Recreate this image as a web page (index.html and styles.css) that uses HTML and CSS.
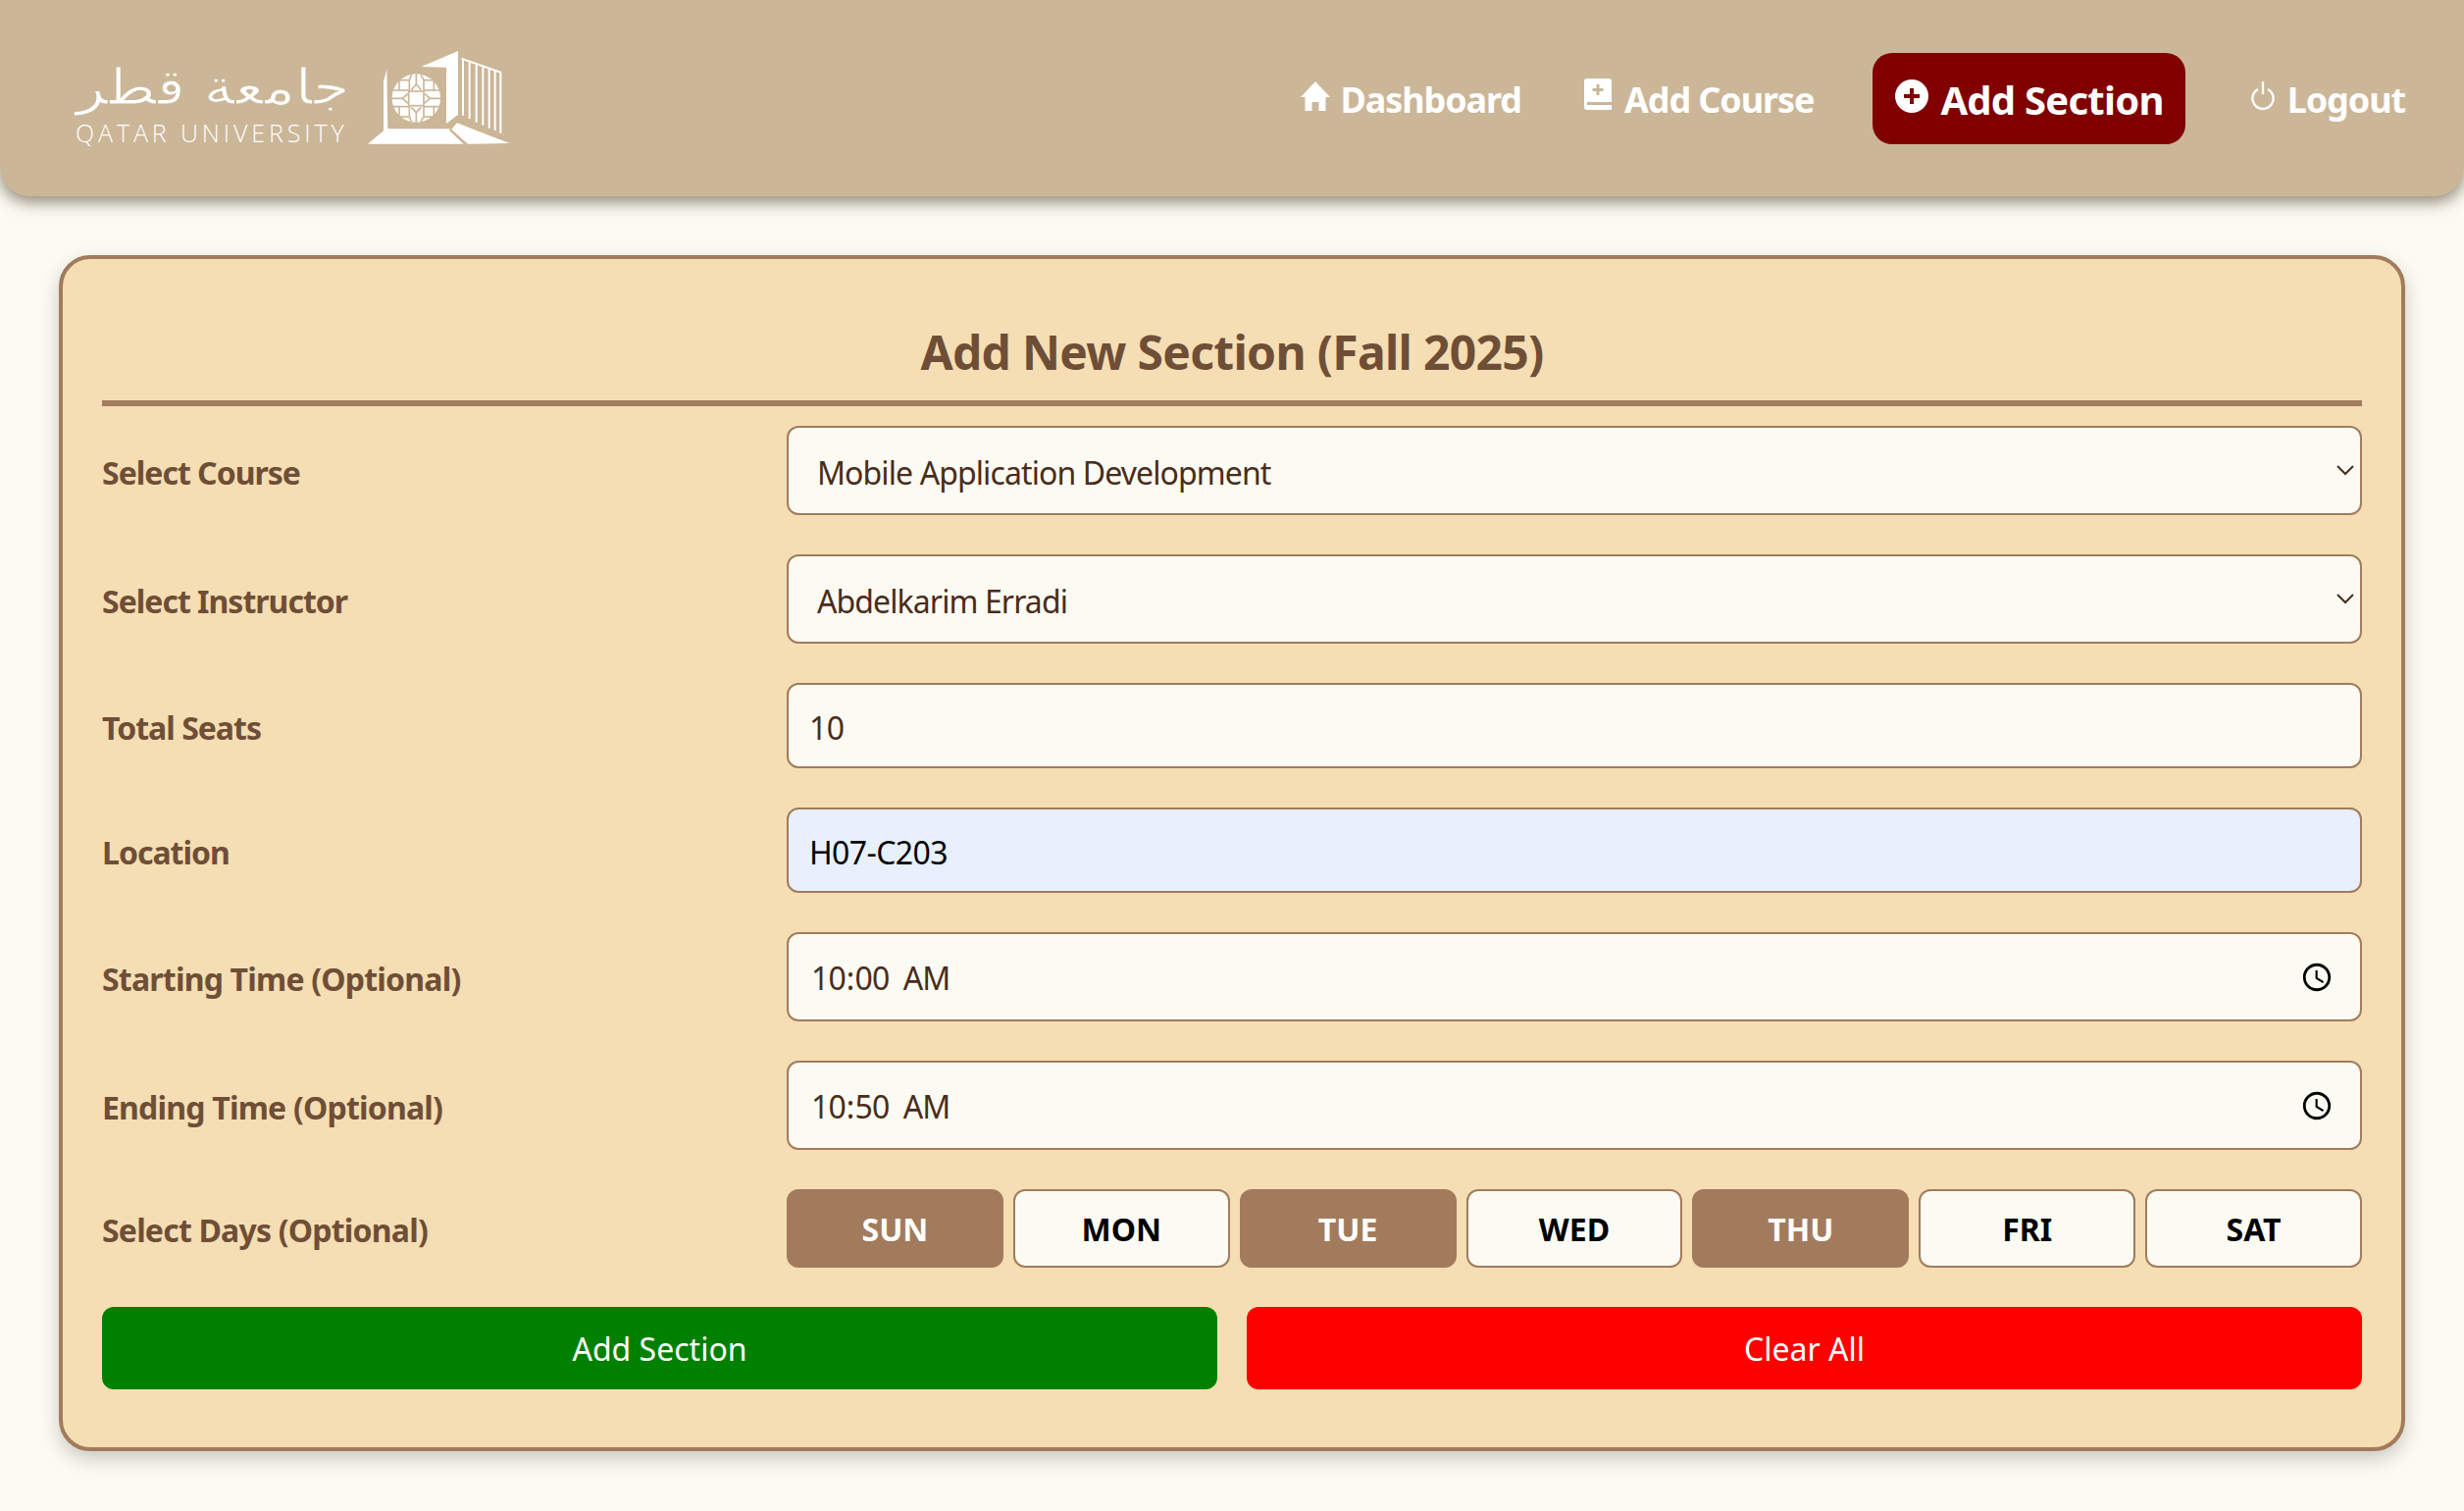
FILE: index.html
```html
<!DOCTYPE html>
<html lang="en">
<head>
  <meta charset="UTF-8">
  <meta name="viewport" content="width=device-width, initial-scale=1.0">
  <title>Add Section</title>
  <link rel="stylesheet" href="styles.css">
</head>
<body>

<header class="topbar">
  <a class="logo" href="#">
    <span class="logo-text">
      <span class="logo-ar" lang="ar" dir="rtl">جامعة قطر</span>
      <span class="logo-en">QATAR UNIVERSITY</span>
    </span>
    <svg class="logo-mark" viewBox="0 0 468 318" fill="#fff">
      <path d="M70 74 L73 256 L262 256 L262 262 L305 302 L12 302 L60 262 L60 110 Z"/>
      <path d="M175 66 L288 18 L288 212 L252 240 L252 68 Z"/>
      <path d="M285 238 L445 300 L318 302 L268 258 Z"/>
      <path d="M298 41 L420 84 M303 43 V215 M323 50 V225 M344 58 V236 M364 65 V245 M383 72 V254 M401 78 V261 M418 84 V269" fill="none" stroke="#fff" stroke-width="6"/>
      <circle cx="160" cy="162" r="74"/>
      <g fill="none" stroke="#cbb698" stroke-width="5">
        <rect x="137" y="141" width="46" height="44"/>
        <rect x="108" y="107" width="31" height="31"/>
        <rect x="183" y="107" width="31" height="31"/>
        <rect x="108" y="188" width="31" height="31"/>
        <rect x="183" y="188" width="31" height="31"/>
        <path d="M160 86 V120 M145 137 L160 120 L175 137 M139 107 L146 90 M183 107 L174 90"/>
        <path d="M160 238 V206 M145 190 L160 206 L175 190 M139 219 L146 234 M183 219 L174 234"/>
        <path d="M84 163 H118 M135 148 L118 163 L135 178 M108 138 L90 138 M108 188 L90 188"/>
        <path d="M236 163 H202 M185 148 L202 163 L185 178 M214 138 L232 138 M214 188 L232 188"/>
        <path d="M108 107 L100 100 M214 107 L222 100 M108 219 L100 226 M214 219 L222 226"/>
      </g>
    </svg>
  </a>
  <nav class="nav">
    <a class="nav-link" href="#">
      <svg class="nav-icon icon-home" viewBox="0 0 30 30" fill="#fff"><path d="M15 0 L30 16 L25.5 16 L25.5 30 L18.5 30 L18.5 21 L11.5 21 L11.5 30 L4.5 30 L4.5 16 L0 16 Z"/></svg>
      <span class="nav-text">Dashboard</span>
    </a>
    <a class="nav-link" href="#">
      <svg class="nav-icon icon-book" viewBox="0 0 28 32" fill="#fff"><path fill-rule="evenodd" d="M3 0 H25 A3 3 0 0 1 28 3 V24 H3 V27 H28 V32 H3 A3 3 0 0 1 0 29 V3 A3 3 0 0 1 3 0 Z M12.5 6 V10 H8.5 V13 H12.5 V17 H15.5 V13 H19.5 V10 H15.5 V6 Z"/></svg>
      <span class="nav-text">Add Course</span>
    </a>
    <a class="nav-link active" href="#">
      <svg class="nav-icon icon-plus" viewBox="0 0 34 34" fill="#fff"><path fill-rule="evenodd" d="M17 0 A17 17 0 1 1 17 34 A17 17 0 1 1 17 0 Z M15 9 V15 H9 V19 H15 V25 H19 V19 H25 V15 H19 V9 Z"/></svg>
      <span class="nav-text">Add Section</span>
    </a>
    <a class="nav-link" href="#">
      <svg class="nav-icon icon-power" viewBox="0 0 24 30" fill="none" stroke="#fff" stroke-width="2.4"><path d="M12 0 V13"/><path d="M7 8 A10.6 10.6 0 1 0 17 8"/></svg>
      <span class="nav-text">Logout</span>
    </a>
  </nav>
</header>

<main class="card">
  <h2 class="card-title">Add New Section (Fall 2025)</h2>

  <form class="section-form">
    <label class="field-label" for="course">Select Course</label>
    <select id="course" class="field tall">
      <option>Mobile Application Development</option>
    </select>

    <label class="field-label" for="instructor">Select Instructor</label>
    <select id="instructor" class="field tall">
      <option>Abdelkarim Erradi</option>
    </select>

    <label class="field-label" for="seats">Total Seats</label>
    <input id="seats" class="field short" type="text" value="10">

    <label class="field-label" for="location">Location</label>
    <input id="location" class="field short autofilled" type="text" value="H07-C203">

    <label class="field-label optional" for="start">Starting Time (Optional)</label>
    <input id="start" class="field tall" type="time" value="10:00">

    <label class="field-label optional" for="end">Ending Time (Optional)</label>
    <input id="end" class="field tall" type="time" value="10:50">

    <span class="field-label optional">Select Days (Optional)</span>
    <div class="days">
      <button type="button" class="day on">SUN</button>
      <button type="button" class="day">MON</button>
      <button type="button" class="day on">TUE</button>
      <button type="button" class="day">WED</button>
      <button type="button" class="day on">THU</button>
      <button type="button" class="day">FRI</button>
      <button type="button" class="day">SAT</button>
    </div>

    <div class="actions">
      <button type="submit" class="action add">Add Section</button>
      <button type="reset" class="action clear">Clear All</button>
    </div>
  </form>
</main>

</body>
</html>
```

FILE: styles.css
```css
* {
  box-sizing: border-box;
}

body {
  margin: 0;
  height: 1540px;
  overflow: hidden;
  font-family: "Noto Sans", "Open Sans", sans-serif;
  font-size: 32px;
  background-color: #fbfbf3;
  color: #4a2c1a;
}

.topbar {
  display: flex;
  align-items: center;
  justify-content: space-between;
  height: 200px;
  padding: 0 36px 0 77px;
  background-color: #cbb698;
  border-radius: 0 0 30px 30px;
  box-shadow: 0 6px 16px rgba(60, 40, 20, 0.55);
}

.logo {
  display: flex;
  align-items: center;
  gap: 14px;
  margin-top: -3px;
  color: #fff;
  text-decoration: none;
}

.logo-text {
  display: flex;
  flex-direction: column;
  width: 280px;
  padding-top: 8px;
}

.logo-ar {
  font-family: "DejaVu Sans", sans-serif;
  font-size: 50px;
  line-height: 64px;
  text-align: center;
  transform: scaleX(1.2);
  -webkit-text-stroke: 1px #cbb698;
}

.logo-en {
  font-family: "Open Sans", sans-serif;
  font-weight: 300;
  font-size: 25px;
  line-height: 28px;
  letter-spacing: 3.9px;
  white-space: nowrap;
}

.logo-mark {
  width: 156px;
  height: 106px;
}

.nav {
  display: flex;
  align-items: center;
  gap: 16px;
}

.nav-link {
  display: flex;
  align-items: center;
  gap: 13px;
  padding: 0 24px;
  color: #fff;
  font-weight: 700;
  font-size: 36px;
  letter-spacing: -1.1px;
  text-decoration: none;
  white-space: nowrap;
}

.nav-text {
  padding-top: 3px;
}

.nav-link.active {
  height: 93px;
  margin: 0 27px 0 20px;
  padding: 0 22px 0 23px;
  gap: 12px;
  background-color: #800000;
  border-radius: 20px;
  font-size: 40px;
  letter-spacing: -0.75px;
}

.nav-icon {
  flex: none;
}

.icon-home { width: 30px; height: 30px; margin: -4px -2px 0 2px; }
.icon-book { width: 28px; height: 32px; margin-top: -8px; }
.icon-plus { width: 34px; height: 34px; margin-top: -4px; }
.icon-power { width: 24px; height: 30px; margin-top: -5px; }

.card {
  margin: 60px 60px 0;
  height: 1219px;
  padding: 40px;
  background-color: #f5deb3;
  border: 4px solid #a27b5c;
  border-radius: 32px;
  box-shadow: 0 8px 20px rgba(0, 0, 0, 0.2);
}

.card-title {
  margin: 0 0 20px;
  height: 110px;
  border-bottom: 6px solid #a27b5c;
  font-size: 48px;
  font-weight: 700;
  letter-spacing: -0.7px;
  line-height: 109px;
  text-align: center;
  color: #6f4e37;
}

.section-form {
  display: grid;
  grid-template-columns: 698px 1fr;
  row-gap: 40px;
  align-items: center;
}

.field-label {
  padding-top: 3px;
  font-weight: 700;
  letter-spacing: -1px;
  color: #6f4e37;
}

.field-label.optional {
  letter-spacing: -0.8px;
}

.field {
  width: 100%;
  padding: 3px 24px 0 21px;
  font-family: inherit;
  font-size: 32px;
  letter-spacing: -0.6px;
  color: #4a2c1a;
  background-color: #fbfbf3;
  border: 2px solid #a27b5c;
  border-radius: 12px;
  outline: none;
}

.tall {
  height: 91px;
}

.short {
  height: 87px;
}

select.field {
  appearance: none;
  padding-left: 29px;
  letter-spacing: -0.9px;
  background-image: url("data:image/svg+xml,%3Csvg xmlns='http://www.w3.org/2000/svg' width='18' height='11'%3E%3Cpath d='M1 1 L9 9 L17 1' fill='none' stroke='%234a2c1a' stroke-width='2'/%3E%3C/svg%3E");
  background-repeat: no-repeat;
  background-position: right 6px center;
}

input[type="time"].field {
  padding: 1px 24px 0 22px;
  letter-spacing: -0.9px;
}

input[type="time"]::-webkit-datetime-edit-ampm-field {
  margin-left: 8px;
}

.autofilled {
  background-color: #e8f0fe;
  color: #000;
}

.days {
  display: grid;
  grid-template-columns: repeat(7, 1fr);
  gap: 10px;
}

.day {
  height: 80px;
  padding-top: 2px;
  font-family: inherit;
  font-size: 32px;
  font-weight: 700;
  color: #000;
  background-color: #fbfbf3;
  border: 2px solid #a27b5c;
  border-radius: 12px;
}

.day.on {
  color: #fff;
  background-color: #a27b5c;
}

.actions {
  grid-column: 1 / -1;
  display: grid;
  grid-template-columns: 1fr 1fr;
  gap: 30px;
}

.action {
  height: 84px;
  font-family: inherit;
  font-size: 32px;
  color: #fff;
  border: none;
  border-radius: 12px;
}

.add {
  background-color: #008000;
}

.clear {
  background-color: #ff0000;
}
```
